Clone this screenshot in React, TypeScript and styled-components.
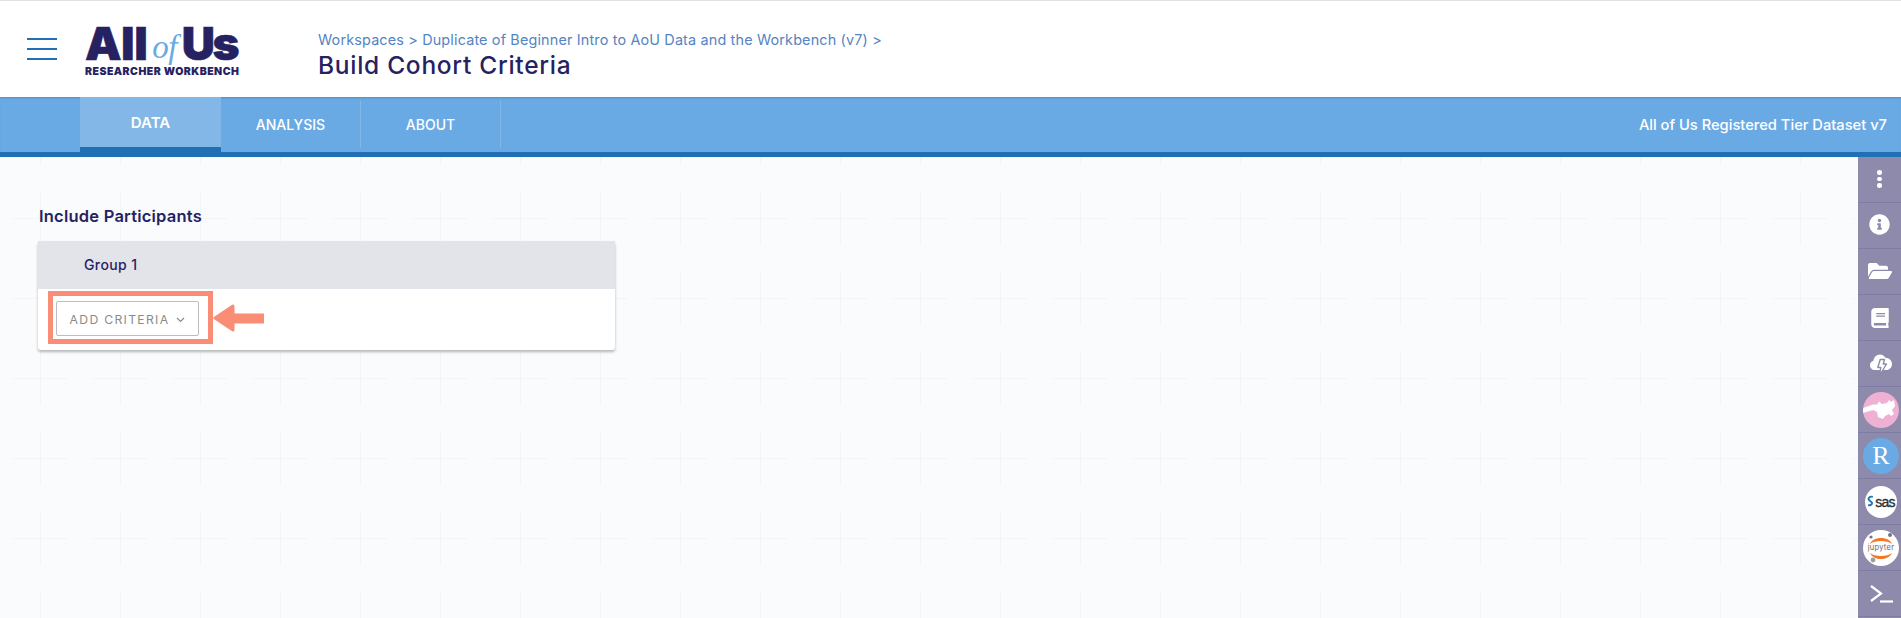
import React from "react";
import styled, { createGlobalStyle } from "styled-components";
import { FaBook, FaFolderOpen, FaInfoCircle } from "react-icons/fa";

const crossTile = encodeURIComponent(
  `<svg xmlns="http://www.w3.org/2000/svg" width="80" height="80"><path d="M40.5 13.5v54M13.5 40.5h54" stroke="#f3f4f7" fill="none"/></svg>`
);

const GlobalStyle = createGlobalStyle`
  html, body {
    margin: 0;
    padding: 0;
    height: 100%;
    overflow: hidden;
    font-family: Inter, "Open Sans", sans-serif;
  }
`;

const Page = styled.div`
  width: 1901px;
  height: 618px;
  display: flex;
  flex-direction: column;
  overflow: hidden;
  background: #fff;
`;

const Header = styled.header`
  height: 96px;
  flex: none;
  display: flex;
  align-items: center;
  background: #fff;
  border-top: 1px solid #e2e2e2;
`;

const MenuButton = styled.div`
  width: 30px;
  margin-left: 27px;
  display: flex;
  flex-direction: column;
  gap: 8px;

  span {
    height: 2px;
    background: #216fb4;
  }
`;

const Logo = styled.div`
  margin: 5px 0 0 28px;
  width: 152px;
  color: #262262;
  font-family: Inter, sans-serif;
  font-weight: 900;
`;

const LogoTop = styled.div`
  display: flex;
  justify-content: space-between;
  height: 35px;
  font-size: 46px;
`;

const LogoWord = styled.span<{ $tracking: number }>`
  display: block;
  height: 35px;
  line-height: 35px;
  letter-spacing: ${(p) => p.$tracking}px;
  -webkit-text-stroke: 0.6px #262262;
`;

const LogoOf = styled.em`
  display: block;
  height: 35px;
  line-height: 42px;
  font-family: "Liberation Serif", serif;
  font-weight: 400;
  font-size: 33px;
  letter-spacing: -0.5px;
  color: #6aaae4;
`;

const LogoBottom = styled.div`
  margin-top: 5px;
  font-size: 10.5px;
  line-height: 11px;
  letter-spacing: 0.48px;
  white-space: nowrap;
`;

const TitleBlock = styled.div`
  margin-left: 81px;
  margin-top: 12px;
`;

const Crumbs = styled.div`
  font-size: 14.4px;
  line-height: 18px;
  color: #5584c2;
  letter-spacing: 0.16px;
`;

const Title = styled.h1`
  margin: 2px 0 0;
  font-size: 24.5px;
  line-height: 28px;
  font-weight: 500;
  color: #262262;
  letter-spacing: 0.72px;
`;

const TabBar = styled.nav`
  height: 55px;
  flex: none;
  display: flex;
  align-items: stretch;
  padding-left: 80px;
  padding-right: 14px;
  background: #6aaae4;
  border-bottom: 5px solid #216fb4;
  box-shadow: inset 0 2px 2px -1px rgba(38, 34, 98, 0.25);
  color: #fff;
`;

const Tab = styled.div<{ $active?: boolean }>`
  width: ${(p) => (p.$active ? 141 : 140)}px;
  display: flex;
  align-items: center;
  justify-content: center;
  box-sizing: border-box;
  font-size: ${(p) => (p.$active ? 15 : 14)}px;
  font-weight: ${(p) => (p.$active ? 600 : 500)};
  ${(p) =>
    p.$active
      ? `
    height: 55px;
    background: #83b7e8;
    border-bottom: 5px solid #216fb4;
  `
      : `
    height: 47px;
    margin-top: 4px;
    border-right: 1px solid #83b7e8;
  `}
`;

const DatasetName = styled.div`
  margin-left: auto;
  align-self: center;
  font-size: 14.7px;
  font-weight: 500;
`;

const Body = styled.div`
  flex: 1;
  display: flex;
  min-height: 0;
  background-color: #fafbfd;
  background-image: url("data:image/svg+xml,${crossTile}");
  background-position: 0 21px;
`;

const Main = styled.main`
  flex: 1;
  padding: 47px 0 0 38px;
`;

const SectionTitle = styled.h2`
  margin: 1px 0 13px 1px;
  font-size: 16.5px;
  line-height: 23px;
  font-weight: 600;
  letter-spacing: 0.22px;
  color: #262262;
`;

const Card = styled.section`
  width: 577px;
  height: 109px;
  background: #fff;
  border-radius: 3px;
  box-shadow: 0 2px 3px rgba(0, 0, 0, 0.28);
`;

const CardHeader = styled.div`
  height: 48px;
  display: flex;
  align-items: center;
  padding: 0 0 2px 46px;
  box-sizing: border-box;
  background: #e2e4e9;
  font-size: 14px;
  font-weight: 500;
  letter-spacing: 0.4px;
  color: #262262;
`;

const CardBody = styled.div`
  display: flex;
  align-items: center;
  padding: 2px 0 0 10px;
`;

const Highlight = styled.div`
  width: 165px;
  height: 53px;
  box-sizing: border-box;
  border: 5px solid #f98d76;
  padding: 5px 0 0 3px;
`;

const CriteriaButton = styled.div`
  width: 143px;
  height: 35px;
  box-sizing: border-box;
  padding-top: 2px;
  display: flex;
  align-items: center;
  justify-content: center;
  gap: 7px;
  background: #fff;
  border: 1px solid #bdbdbd;
  border-radius: 2px;
  font-size: 12.2px;
  letter-spacing: 1.3px;
  color: #8a8a8a;
`;

const Sidebar = styled.aside`
  width: 43px;
  flex: none;
  background: #8d8aac;
`;

const SideItem = styled.div<{ $lift?: boolean }>`
  height: 45px;
  box-sizing: content-box;
  display: flex;
  align-items: center;
  justify-content: center;
  border-bottom: 1px solid #7e7ba5;
  color: #fff;

  & > svg {
    margin-bottom: ${(p) => (p.$lift ? 2 : 0)}px;
  }
`;

const Dots = styled.div`
  display: flex;
  flex-direction: column;
  gap: 2px;
  margin-bottom: 1px;

  span {
    width: 4.5px;
    height: 4.5px;
    border-radius: 50%;
    background: #fff;
  }
`;

const AppCircle = styled.div<{ $bg: string; $size?: number }>`
  width: ${(p) => p.$size ?? 36}px;
  height: ${(p) => p.$size ?? 36}px;
  margin-left: 3px;
  border-radius: 50%;
  overflow: hidden;
  display: flex;
  align-items: center;
  justify-content: center;
  background: ${(p) => p.$bg};
`;

const RLetter = styled.span`
  font-family: "Liberation Serif", serif;
  font-size: 26px;
  line-height: 1;
  color: #fff;
`;

const SasMark = styled.div`
  font-family: "Liberation Sans", sans-serif;
  font-size: 14px;
  letter-spacing: -0.8px;
  color: #2b3038;
  -webkit-text-stroke: 0.35px #2b3038;
`;

const JupyterBadge = styled.div`
  position: relative;
  width: 36px;
  height: 36px;
  display: flex;
  align-items: center;
  justify-content: center;
  font-size: 7.5px;
  color: #666;

  svg {
    position: absolute;
    inset: 0;
  }

  span {
    position: relative;
    letter-spacing: 0.3px;
  }
`;

const Arrow = () => (
  <svg width="51" height="30" viewBox="0 0 51 30" style={{ display: "block", flex: "none" }}>
    <path d="M2 15 L20 3 V12 H51 V19 H20 V27 Z" fill="#f98d76" stroke="#f98d76" strokeWidth="3" strokeLinejoin="round" />
  </svg>
);

const Chevron = () => (
  <svg width="9" height="6" viewBox="0 0 9 6">
    <path d="M1 1l3.5 3.5L8 1" fill="none" stroke="#8a8a8a" strokeWidth="1.2" />
  </svg>
);

const CloudBolt = () => (
  <svg width="24" height="24" viewBox="0 0 24 24" style={{ marginLeft: 3 }}>
    <path
      d="M6 18C3 18 1 15.800 1 13.200 1 11 2.400 9.400 4.400 8.800 4.800 5.400 7.600 2.500 11 2.500 13.400 2.500 15.400 3.800 16.400 5.700 20 5.700 23 8.500 23 12 23 15.400 20.500 18 17.500 18Z"
      fill="#fff"
    />
    <path d="M11.200 7.500H15.500L14.200 12H17.500L10.500 23.500 11.800 15.500H8.800Z" fill="#fff" stroke="#8d8aac" strokeWidth="1.400" strokeLinejoin="round" />
  </svg>
);

const GenomicBeast = () => (
  <svg width="36" height="36" viewBox="0 0 36 36">
    <path
      d="M0 16L10 12.500H14L16 9.500 19 12 24 11 26 8 28 10 31 8 32 14 29 18 31 22 28 24 26 22 22 24 20 27 15 25 14 20 10 18 0 21Z"
      fill="#fff"
    />
  </svg>
);

const SasSwirl = () => (
  <svg width="7" height="13" viewBox="0 0 9 15" style={{ marginRight: 1 }}>
    <path d="M7.500 1.500C3 .5 .5 3.500 3 6L6 8.500C7.500 10.500 5 13 1.500 12" fill="none" stroke="#1f76bb" strokeWidth="2.400" />
  </svg>
);

const JupyterRings = () => (
  <svg width="36" height="36" viewBox="0 0 36 36">
    <path d="M7 14C10 6 26 6 29 14C25 10 11 10 7 14Z" fill="#f37726" />
    <path d="M7 23C11 31 25 31 29 23C25 27 11 27 7 23Z" fill="#f37726" />
    <circle cx="8" cy="7" r="1.600" fill="#767677" />
    <circle cx="27" cy="5" r="2" fill="#767677" />
    <circle cx="10" cy="30" r="2.400" fill="#9e9e9e" />
  </svg>
);

const TerminalGlyph = () => (
  <svg width="24" height="20" viewBox="0 0 24 20" style={{ marginLeft: 3 }}>
    <path d="M2 2L12 9.500 2 17" fill="none" stroke="#fff" strokeWidth="2.200" />
    <path d="M11 17.500H24" stroke="#fff" strokeWidth="2.200" />
  </svg>
);

export default function App() {
  return (
    <Page>
      <GlobalStyle />
      <Header>
        <MenuButton>
          <span />
          <span />
          <span />
        </MenuButton>
        <Logo>
          <LogoTop>
            <LogoWord $tracking={-0.5}>All</LogoWord>
            <LogoOf>of</LogoOf>
            <LogoWord $tracking={-2.5}>Us</LogoWord>
          </LogoTop>
          <LogoBottom>RESEARCHER WORKBENCH</LogoBottom>
        </Logo>
        <TitleBlock>
          <Crumbs>Workspaces &gt; Duplicate of Beginner Intro to AoU Data and the Workbench (v7) &gt;</Crumbs>
          <Title>Build Cohort Criteria</Title>
        </TitleBlock>
      </Header>
      <TabBar>
        <Tab $active>DATA</Tab>
        <Tab>ANALYSIS</Tab>
        <Tab>ABOUT</Tab>
        <DatasetName>All of Us Registered Tier Dataset v7</DatasetName>
      </TabBar>
      <Body>
        <Main>
          <SectionTitle>Include Participants</SectionTitle>
          <Card>
            <CardHeader>Group 1</CardHeader>
            <CardBody>
              <Highlight>
                <CriteriaButton>
                  ADD CRITERIA <Chevron />
                </CriteriaButton>
              </Highlight>
              <Arrow />
            </CardBody>
          </Card>
        </Main>
        <Sidebar>
          <SideItem>
            <Dots>
              <span />
              <span />
              <span />
            </Dots>
          </SideItem>
          <SideItem $lift>
            <FaInfoCircle size={21} />
          </SideItem>
          <SideItem $lift>
            <FaFolderOpen size={24} />
          </SideItem>
          <SideItem>
            <FaBook size={20} />
          </SideItem>
          <SideItem>
            <CloudBolt />
          </SideItem>
          <SideItem>
            <AppCircle $bg="#efb1d3">
              <GenomicBeast />
            </AppCircle>
          </SideItem>
          <SideItem>
            <AppCircle $bg="#6aaae4">
              <RLetter>R</RLetter>
            </AppCircle>
          </SideItem>
          <SideItem>
            <AppCircle $bg="#fff" $size={32}>
              <SasSwirl />
              <SasMark>sas</SasMark>
            </AppCircle>
          </SideItem>
          <SideItem>
            <AppCircle $bg="#fff">
              <JupyterBadge>
                <JupyterRings />
                <span>jupyter</span>
              </JupyterBadge>
            </AppCircle>
          </SideItem>
          <SideItem>
            <TerminalGlyph />
          </SideItem>
        </Sidebar>
      </Body>
    </Page>
  );
}
